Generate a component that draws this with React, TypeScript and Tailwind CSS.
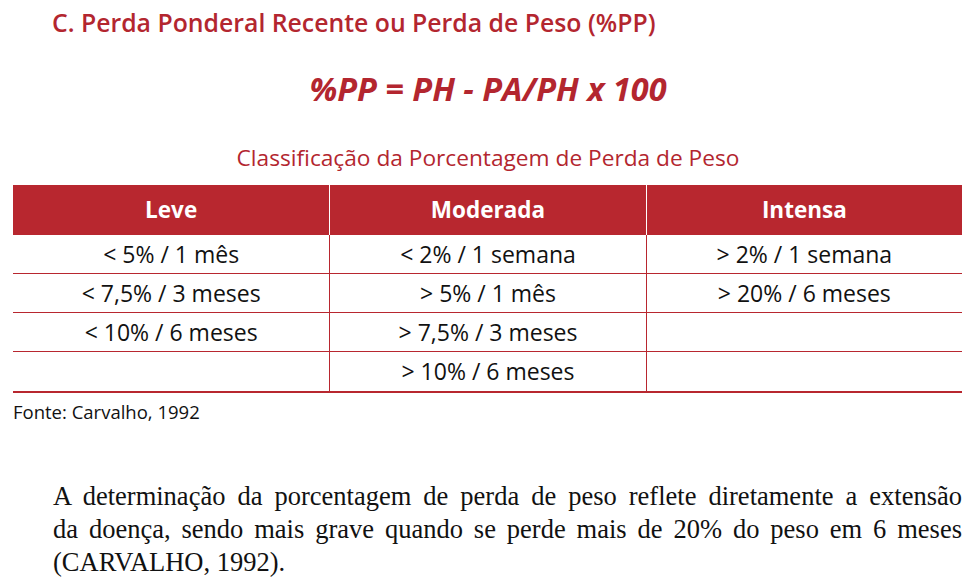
const red = "text-[#b3262f]";

const rows = [
  ["< 5% / 1 mês", "< 2% / 1 semana", "> 2% / 1 semana"],
  ["< 7,5% / 3 meses", "> 5% / 1 mês", "> 20% / 6 meses"],
  ["< 10% / 6 meses", "> 7,5% / 3 meses", ""],
  ["", "> 10% / 6 meses", ""],
];

export default function App() {
  return (
    <main className="w-[976px] h-[588px] bg-white overflow-hidden font-['Open_Sans',sans-serif]">
      <h1 className={`pt-[6px] pl-[52px] text-[24.8px] leading-[32px] font-semibold ${red}`}>
        C. Perda Ponderal Recente ou Perda de Peso (%PP)
      </h1>

      <div className={`mt-[31px] text-center text-[32.5px] leading-[40px] font-bold italic ${red}`}>
        %PP = PH - PA/PH x 100
      </div>

      <div className={`mt-[35px] text-center text-[22.7px] leading-[28px] ${red}`}>
        Classificação da Porcentagem de Perda de Peso
      </div>

      <div className="mt-[13px] ml-[13px] w-[949px]">
        <div className="grid grid-cols-3 h-[50px] bg-[#b8272f] text-white text-[22.5px] font-bold">
          <div className="flex items-center justify-center">Leve</div>
          <div className="flex items-center justify-center border-l border-white">Moderada</div>
          <div className="flex items-center justify-center border-l border-white">Intensa</div>
        </div>
        {rows.map((r, i) => (
          <div
            key={i}
            className={`grid grid-cols-3 border-[#b8272f] text-[23px] text-[#111] ${
              i === rows.length - 1 ? "h-[41px] border-b-2" : "h-[39px] border-b"
            }`}
          >
            {r.map((c, j) => (
              <div
                key={j}
                className={`flex items-center justify-center ${j > 0 ? "border-l border-[#b8272f]" : ""}`}
              >
                {c}
              </div>
            ))}
          </div>
        ))}
      </div>

      <div className="mt-[7px] ml-[13px] text-[18.5px] leading-[24px] text-[#111]">Fonte: Carvalho, 1992</div>

      <div className="mt-[56px] ml-[53px] w-[909px] font-['Liberation_Serif',serif] text-[26.5px] leading-[33px] text-[#111]">
        <p className="text-justify [text-align-last:justify]">
          A determinação da porcentagem de perda de peso reflete diretamente a extensão
        </p>
        <p className="text-justify [text-align-last:justify]">
          da doença, sendo mais grave quando se perde mais de 20% do peso em 6 meses
        </p>
        <p>(CARVALHO, 1992).</p>
      </div>
    </main>
  );
}
